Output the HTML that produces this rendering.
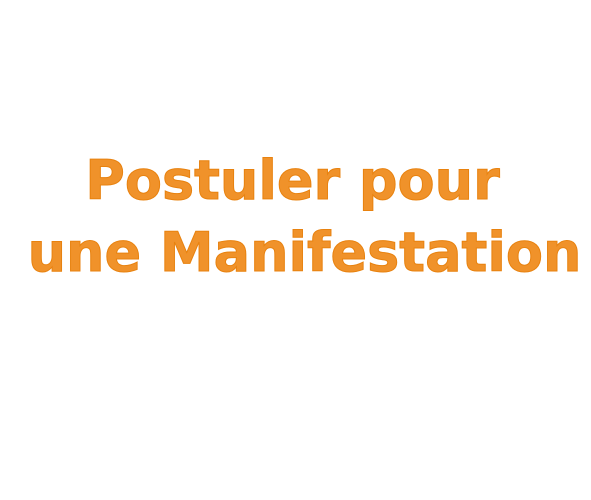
<!DOCTYPE html>
<html><head><meta charset="utf-8"><style>
html,body{margin:0;padding:0;background:#fff;width:591px;height:500px;overflow:hidden}
.t{position:absolute;left:0;width:591px;text-align:center;font-family:"DejaVu Sans","Liberation Sans",sans-serif;font-weight:bold;font-size:54px;color:#f0922a;-webkit-text-stroke:1px #e8820f;white-space:nowrap;line-height:1}
</style></head><body>
<div class="t" style="top:154px;left:-3px">Postuler pour</div>
<div class="t" style="top:226px;left:9px">une Manifestation</div>
</body></html>
